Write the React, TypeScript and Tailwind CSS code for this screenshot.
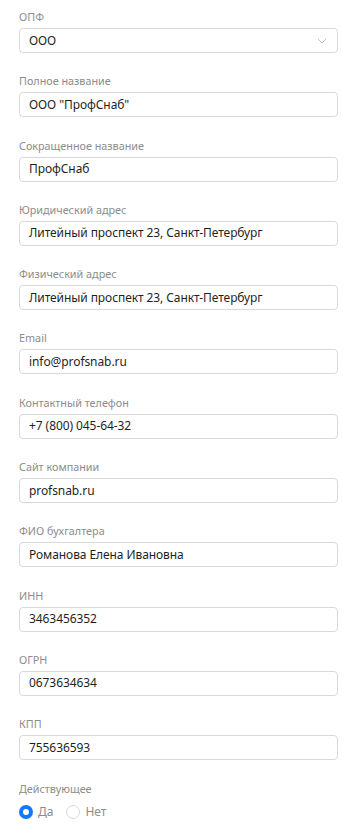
import React from "react";

const fields: { label: string; value: string; select?: boolean }[] = [
  { label: "ОПФ", value: "ООО", select: true },
  { label: "Полное название", value: 'ООО "ПрофСнаб"' },
  { label: "Сокращенное название", value: "ПрофСнаб" },
  { label: "Юридический адрес", value: "Литейный проспект 23, Санкт-Петербург" },
  { label: "Физический адрес", value: "Литейный проспект 23, Санкт-Петербург" },
  { label: "Email", value: "info@profsnab.ru" },
  { label: "Контактный телефон", value: "+7 (800) 045-64-32" },
  { label: "Сайт компании", value: "profsnab.ru" },
  { label: "ФИО бухгалтера", value: "Романова Елена Ивановна" },
  { label: "ИНН", value: "3463456352" },
  { label: "ОГРН", value: "0673634634" },
  { label: "КПП", value: "755636593" },
];

export default function App() {
  return (
    <div
      className="w-[354px] min-h-[835px] bg-white pl-[19px] pr-[16px] pt-[9px] flex flex-col gap-[20.3px]"
      style={{ fontFamily: '"Noto Sans", "Open Sans", sans-serif' }}
    >
      {fields.map((f) => (
        <div key={f.label} className="flex flex-col">
          <div className="text-[10.8px] leading-[16px] text-[#8c8c8c] mb-[3px]">{f.label}</div>
          <div className="h-[25px] border border-[#d9d9d9] rounded-[4px] flex items-center pl-[9px] pr-[10px] text-[12px] tracking-[-0.08px] text-[#1f1f1f]">
            <span className="flex-1">{f.value}</span>
            {f.select && (
              <svg width="10" height="6" viewBox="0 0 10 6" fill="none">
                <path d="M1 1l4 4 4-4" stroke="#c4c4c4" strokeWidth="1" />
              </svg>
            )}
          </div>
        </div>
      ))}
      <div className="flex flex-col">
        <div className="text-[10.8px] leading-[16px] text-[#8c8c8c] mb-[6px]">Действующее</div>
        <div className="flex items-center text-[12px] text-[#8c8c8c]">
          <span className="w-[14px] h-[14px] rounded-full border-[4.5px] border-[#1677ff] bg-white" />
          <span className="ml-[5px]">Да</span>
          <span className="ml-[13px] w-[14px] h-[14px] rounded-full border border-[#d9d9d9] bg-white" />
          <span className="ml-[5px]">Нет</span>
        </div>
      </div>
    </div>
  );
}
